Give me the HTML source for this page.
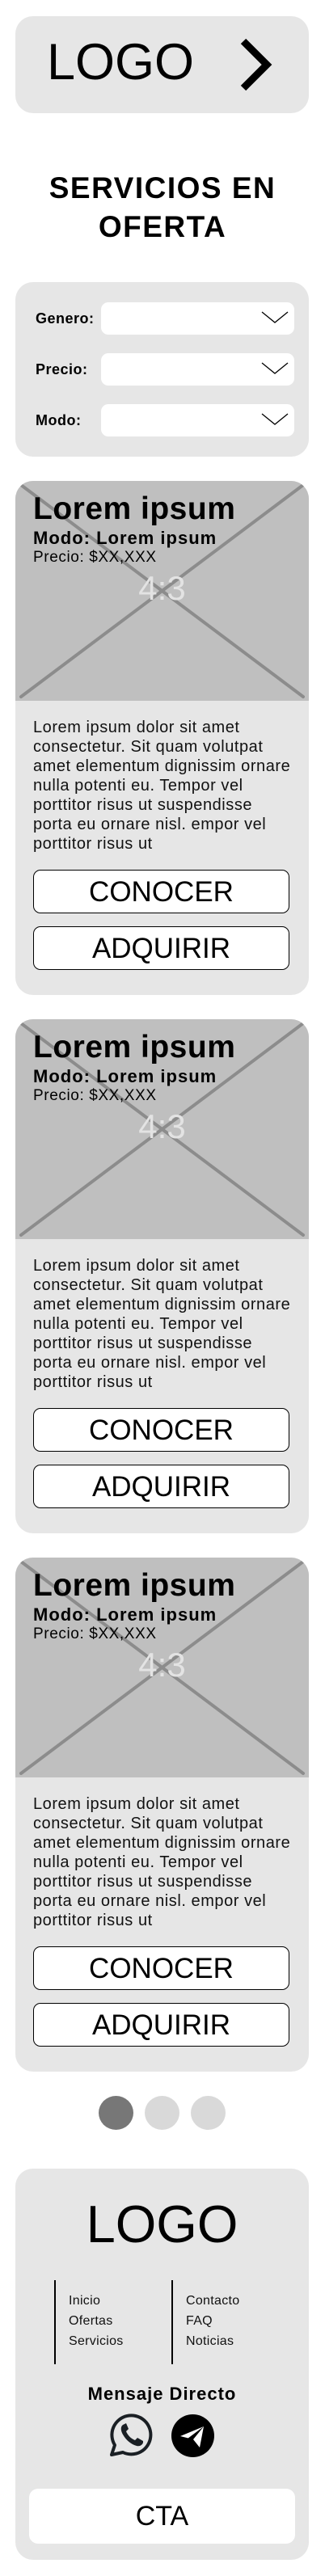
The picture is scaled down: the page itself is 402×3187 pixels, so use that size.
<!DOCTYPE html>
<html><head><meta charset="utf-8">
<style>
*{margin:0;padding:0;box-sizing:border-box}
html,body{width:402px;height:3187px;background:#fff;overflow:hidden}
body{position:relative;font-family:"Liberation Sans",Arial,sans-serif;color:#000}
.abs{position:absolute}
.box{position:absolute;left:19px;width:363px;background:#e6e6e6;border-radius:22px}
.t{position:absolute;white-space:nowrap}
.sel{position:absolute;left:106px;width:239px;height:40px;background:#fff;border-radius:9px}
.lab{position:absolute;left:25px;font-weight:bold;font-size:18px;letter-spacing:0.5px;line-height:40px}
.card{position:absolute;left:19px;width:363px;height:636px;background:#e6e6e6;border-radius:22px;overflow:hidden}
.img{position:absolute;left:0;top:0;width:363px;height:272px;background:#bfbfbf}
.btn{position:absolute;left:22px;width:317px;height:54px;border:1.3px solid #000;border-radius:9px;background:#fff;text-align:center;font-size:35px;line-height:54px}
.dot{position:absolute;top:2593px;width:43px;height:42px;border-radius:50%;background:#d9d9d9}
.lk{font-size:16px;letter-spacing:0.3px;line-height:25px;color:#111}
.h1{left:22px;top:15px;font-size:39px;line-height:39px;font-weight:bold;letter-spacing:0.5px}
.h2{left:22px;top:60px;font-size:22px;line-height:22px;font-weight:bold;letter-spacing:1px}
.h3{left:22px;top:85px;font-size:19px;line-height:19px;letter-spacing:0.6px}
.r{left:0;width:363px;text-align:center;top:112px;font-size:42px;line-height:42px;color:#e3e3e3}
.body{left:22px;top:293px;font-size:20px;line-height:24px;letter-spacing:0.55px;color:#111}
</style></head><body>

<div class="box" style="top:20px;height:120px">
  <div class="t" style="left:39px;top:26px;font-size:63px;line-height:63px">LOGO</div>
  <svg class="abs" style="left:0;top:0" width="363" height="120"><polyline points="282,31 311,60 282,89" fill="none" stroke="#000" stroke-width="9"/></svg>
</div>

<div class="t" style="left:0;width:402px;text-align:center;top:209px;font-size:37px;line-height:48px;font-weight:bold;letter-spacing:1.5px">SERVICIOS EN<br>OFERTA</div>

<div class="box" style="top:349px;height:216px">
  <div class="lab" style="top:25px">Genero:</div>
  <div class="sel" style="top:25px"></div>
  <div class="lab" style="top:88px">Precio:</div>
  <div class="sel" style="top:88px"></div>
  <div class="lab" style="top:151px">Modo:</div>
  <div class="sel" style="top:151px"></div>
  <svg class="abs" style="left:0;top:0" width="363" height="216" fill="none" stroke="#000" stroke-width="1.3">
    <polyline points="305,37 321,50 337,37"/>
    <polyline points="305,100 321,113 337,100"/>
    <polyline points="305,163 321,176 337,163"/>
  </svg>
</div>

<div class="card" style="top:595px">
  <div class="img"><svg width="363" height="272"><g stroke="#8c8c8c" stroke-width="4" stroke-linecap="round"><line x1="7" y1="5" x2="356" y2="267"/><line x1="356" y1="5" x2="7" y2="267"/></g></svg></div>
  <div class="t h1">Lorem ipsum</div>
  <div class="t h2">Modo: Lorem ipsum</div>
  <div class="t h3">Precio: $XX,XXX</div>
  <div class="t r">4:3</div>
  <div class="t body">Lorem ipsum dolor sit amet<br>consectetur. Sit quam volutpat<br>amet elementum dignissim ornare<br>nulla potenti eu. Tempor vel<br>porttitor risus ut suspendisse<br>porta eu ornare nisl. empor vel<br>porttitor risus ut</div>
  <div class="btn" style="top:481px">CONOCER</div>
  <div class="btn" style="top:551px">ADQUIRIR</div>
</div>

<div class="card" style="top:1261px">
  <div class="img"><svg width="363" height="272"><g stroke="#8c8c8c" stroke-width="4" stroke-linecap="round"><line x1="7" y1="5" x2="356" y2="267"/><line x1="356" y1="5" x2="7" y2="267"/></g></svg></div>
  <div class="t h1">Lorem ipsum</div>
  <div class="t h2">Modo: Lorem ipsum</div>
  <div class="t h3">Precio: $XX,XXX</div>
  <div class="t r">4:3</div>
  <div class="t body">Lorem ipsum dolor sit amet<br>consectetur. Sit quam volutpat<br>amet elementum dignissim ornare<br>nulla potenti eu. Tempor vel<br>porttitor risus ut suspendisse<br>porta eu ornare nisl. empor vel<br>porttitor risus ut</div>
  <div class="btn" style="top:481px">CONOCER</div>
  <div class="btn" style="top:551px">ADQUIRIR</div>
</div>

<div class="card" style="top:1927px">
  <div class="img"><svg width="363" height="272"><g stroke="#8c8c8c" stroke-width="4" stroke-linecap="round"><line x1="7" y1="5" x2="356" y2="267"/><line x1="356" y1="5" x2="7" y2="267"/></g></svg></div>
  <div class="t h1">Lorem ipsum</div>
  <div class="t h2">Modo: Lorem ipsum</div>
  <div class="t h3">Precio: $XX,XXX</div>
  <div class="t r">4:3</div>
  <div class="t body">Lorem ipsum dolor sit amet<br>consectetur. Sit quam volutpat<br>amet elementum dignissim ornare<br>nulla potenti eu. Tempor vel<br>porttitor risus ut suspendisse<br>porta eu ornare nisl. empor vel<br>porttitor risus ut</div>
  <div class="btn" style="top:481px">CONOCER</div>
  <div class="btn" style="top:551px">ADQUIRIR</div>
</div>

<div class="dot" style="left:122px;background:#777"></div>
<div class="dot" style="left:179px"></div>
<div class="dot" style="left:236px"></div>

<div class="box" style="top:2683px;height:484px">
  <div class="t" style="left:0;width:363px;text-align:center;top:36px;font-size:65px;line-height:65px">LOGO</div>
  <div class="abs" style="left:48px;top:138px;width:1.5px;height:104px;background:#000"></div>
  <div class="abs" style="left:193px;top:138px;width:1.5px;height:104px;background:#000"></div>
  <div class="t lk" style="left:66px;top:151px">Inicio<br>Ofertas<br>Servicios</div>
  <div class="t lk" style="left:211px;top:151px">Contacto<br>FAQ<br>Noticias</div>
  <div class="t" style="left:0;width:363px;text-align:center;top:267px;font-size:22px;line-height:24px;font-weight:bold;letter-spacing:1px">Mensaje Directo</div>
  <svg class="abs" style="left:115px;top:302px" width="56" height="56" viewBox="0 0 56 56">
    <path d="M4 52 L8 40 A24 24 0 1 1 18 49 Z" fill="none" stroke="#1a1f24" stroke-width="4" stroke-linejoin="round"/>
    <path d="M18 15 C15 17 15 22 18 27 C22 34 28 39 35 41 C39 42 42 40 43 37 L43 35 L36 31 L33 34 C28 32 24 28 22 23 L25 20 L22 13 Z" fill="#1a1f24"/>
  </svg>
  <svg class="abs" style="left:193px;top:304px" width="54" height="54" viewBox="0 0 54 54">
    <circle cx="26.5" cy="26.5" r="26.5" fill="#000"/>
    <path d="M11 27 L40 15 L35 41 L27 31 Z" fill="#fff"/>
    <path d="M27 31 L40 15 L20 30 Z" fill="#000"/>
  </svg>
  <div class="abs" style="left:17px;top:396px;width:329px;height:68px;background:#fff;border-radius:11px;text-align:center;font-size:34px;line-height:68px">CTA</div>
</div>

</body></html>
